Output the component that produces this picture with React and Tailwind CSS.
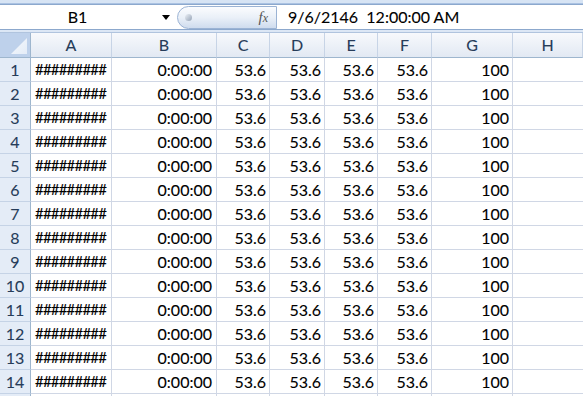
import React from 'react';

const cols = ['A', 'B', 'C', 'D', 'E', 'F', 'G', 'H'];
const rows = Array.from({ length: 14 }, (_, i) => i + 1);

export default function App() {
  return (
    <div className="w-[583px] h-[396px] overflow-hidden bg-white text-black [-webkit-text-stroke:0.1px]" style={{ fontFamily: 'Lato, "Liberation Sans", sans-serif' }}>
      {/* ribbon edge */}
      <div className="h-[3px] bg-[#d7e4f4]" />
      <div className="h-[1px] bg-[#aac2e2]" />
      <div className="h-[1px] bg-[#8ca8cd]" />

      {/* formula bar */}
      <div className="h-[24px] flex items-center bg-white">
        <div className="w-[155px] text-center text-[16px] leading-none">B1</div>
        <div className="w-[22px] flex justify-center">
          <div className="w-0 h-0 border-l-[4px] border-r-[4px] border-t-[5px] border-l-transparent border-r-transparent border-t-black" />
        </div>
        <div className="w-[100px] h-[23px] rounded-l-full border border-[#9bb3d4] bg-gradient-to-b from-[#fbfcfe] via-[#eaf0f8] to-[#cfdcee] flex items-center">
          <div className="ml-[7px] w-[7px] h-[7px] rounded-full bg-gradient-to-br from-[#eef2f7] to-[#94a2b5]" />
          <span className="ml-auto mr-[8px] text-[15px] italic text-[#555] leading-none [-webkit-text-stroke:0px]" style={{ fontFamily: '"Liberation Serif", serif' }}>
            f<span className="text-[12px]">x</span>
          </span>
        </div>
        <div className="pl-[11px] text-[16px] leading-none whitespace-pre">9/6/2146  12:00:00 AM</div>
      </div>
      <div className="h-[1px] bg-[#8ca8cd]" />
      <div className="h-[2px] bg-[#dce7f5]" />
      <div className="h-[1px] bg-[#b0c4de]" />

      {/* sheet */}
      <div className="grid grid-cols-[31px_81px_105px_53px_55px_53px_54px_81px_1fr] text-[16px]">
        <div className="relative h-[25px] bg-[#bed1eb] border-r border-b border-[#9eb6ce]">
          <div className="absolute right-[3px] bottom-[3px] w-[16px] h-[16px] bg-gradient-to-br from-[#f6f9fd] to-[#e4ecf7]" style={{ clipPath: 'polygon(100% 0, 100% 100%, 0 100%)' }} />
        </div>
        {cols.map(c => (
          <div key={c} className="h-[25px] flex items-center justify-center bg-gradient-to-b from-[#f7f9fc] to-[#e2e9f3] border-r border-b border-r-[#c7d4e6] border-b-[#9eb6ce] text-[#263c59]">
            {c}
          </div>
        ))}
        {rows.map(r => (
          <React.Fragment key={r}>
            <div className="h-[24px] flex items-center justify-center bg-[#e4ecf7] border-r border-b border-r-[#9eb6ce] border-b-[#c5d3e6] text-[#263c59]">
              {r}
            </div>
            <div className="h-[24px] flex items-center pl-[4px] border-r border-b border-[#d0d7e5] whitespace-nowrap text-[15px] tracking-[-0.8px]">#########</div>
            <div className="h-[24px] flex items-center justify-end pr-[4px] border-r border-b border-[#d0d7e5]">0:00:00</div>
            <div className="h-[24px] flex items-center justify-end pr-[3px] border-r border-b border-[#d0d7e5]">53.6</div>
            <div className="h-[24px] flex items-center justify-end pr-[3px] border-r border-b border-[#d0d7e5]">53.6</div>
            <div className="h-[24px] flex items-center justify-end pr-[3px] border-r border-b border-[#d0d7e5]">53.6</div>
            <div className="h-[24px] flex items-center justify-end pr-[3px] border-r border-b border-[#d0d7e5]">53.6</div>
            <div className="h-[24px] flex items-center justify-end pr-[3px] border-r border-b border-[#d0d7e5]">100</div>
            <div className="h-[24px] border-b border-[#d0d7e5]" />
          </React.Fragment>
        ))}
        <div className="h-[24px] bg-[#e4ecf7] border-r border-[#9eb6ce]" />
        <div className="h-[24px] border-r border-[#d0d7e5]" />
        <div className="h-[24px] border-r border-[#d0d7e5]" />
        <div className="h-[24px] border-r border-[#d0d7e5]" />
        <div className="h-[24px] border-r border-[#d0d7e5]" />
        <div className="h-[24px] border-r border-[#d0d7e5]" />
        <div className="h-[24px] border-r border-[#d0d7e5]" />
        <div className="h-[24px] border-r border-[#d0d7e5]" />
        <div className="h-[24px]" />
      </div>
    </div>
  );
}
